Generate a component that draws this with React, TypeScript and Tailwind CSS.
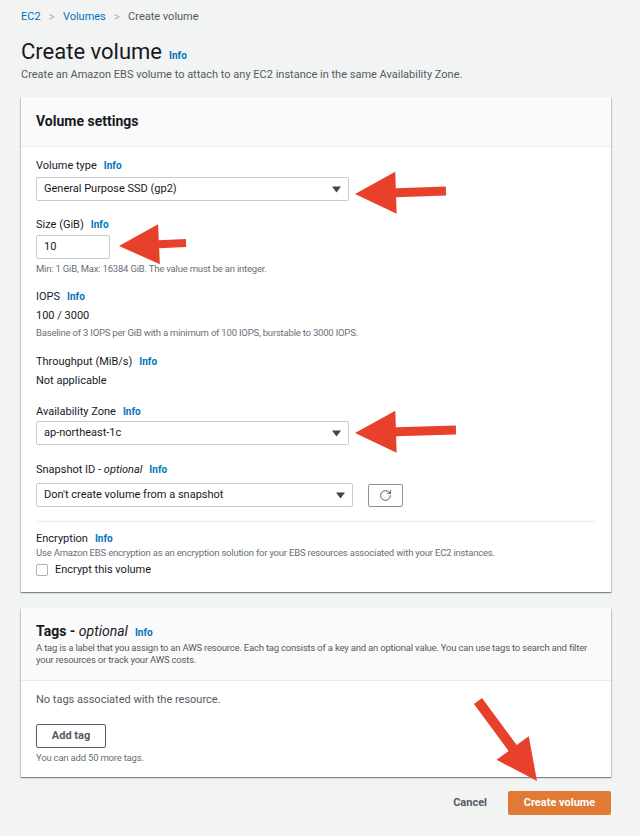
import { RotateCw } from 'lucide-react'

const font = { fontFamily: 'Roboto, "Liberation Sans", sans-serif' }

function Info() {
  return <span className="ml-[7px] text-[10px] font-bold text-[#0073bb]">Info</span>
}

function Label({ children }: { children: React.ReactNode }) {
  return <div className="flex items-baseline text-[11px] leading-[14px] text-[#16191f]">{children}</div>
}

function Hint({ children, className = '' }: { children: React.ReactNode; className?: string }) {
  return <p className={`text-[9.5px] leading-[13px] tracking-[-0.2px] text-[#687078] ${className}`}>{children}</p>
}

function Caret() {
  return (
    <svg width="9" height="7" viewBox="0 0 9 7" className="shrink-0">
      <path d="M0 0.5h9L4.5 6.5z" fill="#3f4650" />
    </svg>
  )
}

function Select({ value, width }: { value: string; width: string }) {
  return (
    <div className={`flex h-[24px] items-center justify-between rounded-[2px] border border-[#c6cccd] bg-white pl-[7px] pr-[7px] ${width}`}>
      <span className="text-[11px] text-[#16191f]">{value}</span>
      <Caret />
    </div>
  )
}

type Pt = { x: number; y: number }

// red annotation arrow: tail -> tip
function Arrow({ tail, tip, head = 41, half = 21, shaft = 4.5 }: { tail: Pt; tip: Pt; head?: number; half?: number; shaft?: number }) {
  const dx = tip.x - tail.x
  const dy = tip.y - tail.y
  const len = Math.hypot(dx, dy)
  const ux = dx / len
  const uy = dy / len
  const nx = -uy
  const ny = ux
  const bx = tip.x - ux * head
  const by = tip.y - uy * head
  const pts = [
    [tip.x, tip.y],
    [bx + nx * half, by + ny * half],
    [bx + nx * shaft, by + ny * shaft],
    [tail.x + nx * shaft, tail.y + ny * shaft],
    [tail.x - nx * shaft, tail.y - ny * shaft],
    [bx - nx * shaft, by - ny * shaft],
    [bx - nx * half, by - ny * half],
  ]
  return <polygon points={pts.map((p) => p.join(',')).join(' ')} fill="#e8412b" />
}

const cardShadow =
  'shadow-[0_1px_1px_0_rgba(0,28,36,0.3),1px_1px_1px_0_rgba(0,28,36,0.15),-1px_1px_1px_0_rgba(0,28,36,0.15)]'

export default function App() {
  return (
    <div className="relative min-h-[836px] w-[640px] bg-[#f2f3f3] px-[21px] pt-[10px]" style={font}>
      {/* breadcrumb */}
      <div className="flex items-center text-[11px] leading-[14px]">
        <span className="text-[#0073bb]">EC2</span>
        <span className="mx-[8px] text-[12px] text-[#aab7b8]">&gt;</span>
        <span className="text-[#0073bb]">Volumes</span>
        <span className="mx-[8px] text-[12px] text-[#aab7b8]">&gt;</span>
        <span className="text-[#545b64]">Create volume</span>
      </div>

      <div className="mt-[14px] flex items-baseline">
        <h1 className="text-[22px] leading-[28px] text-[#16191f]">Create volume</h1>
        <Info />
      </div>
      <p className="mt-[2px] text-[11px] leading-[14px] text-[#545b64]">
        Create an Amazon EBS volume to attach to any EC2 instance in the same Availability Zone.
      </p>

      {/* volume settings */}
      <div className={`mt-[15px] w-[590px] bg-white ${cardShadow}`}>
        <div className="flex h-[50px] items-center border-b border-[#eaeded] bg-[#fafafa] px-[15px]">
          <h2 className="text-[14px] font-bold text-[#16191f]">Volume settings</h2>
        </div>
        <div className="px-[15px] pb-[14px] pt-[12px]">
          <Label>Volume type<Info /></Label>
          <div className="mt-[4px]">
            <Select value="General Purpose SSD (gp2)" width="w-[313px]" />
          </div>

          <div className="mt-[17px]">
            <Label>Size (GiB)<Info /></Label>
          </div>
          <div className="mt-[3px] flex h-[24px] w-[74px] items-center rounded-[2px] border border-[#c6cccd] pl-[7px] text-[11px] text-[#16191f]">
            10
          </div>
          <Hint className="mt-[3px]">Min: 1 GiB, Max: 16384 GiB. The value must be an integer.</Hint>

          <div className="mt-[15px]">
            <Label>IOPS<Info /></Label>
          </div>
          <p className="mt-[5px] text-[11px] leading-[14px] text-[#16191f]">100 / 3000</p>
          <Hint className="mt-[3px]">Baseline of 3 IOPS per GiB with a minimum of 100 IOPS, burstable to 3000 IOPS.</Hint>

          <div className="mt-[16px]">
            <Label>Throughput (MiB/s)<Info /></Label>
          </div>
          <p className="mt-[5px] text-[11px] leading-[14px] text-[#16191f]">Not applicable</p>

          <div className="mt-[17px]">
            <Label>Availability Zone<Info /></Label>
          </div>
          <div className="mt-[2px]">
            <Select value="ap-northeast-1c" width="w-[313px]" />
          </div>

          <div className="mt-[18px]">
            <Label>
              Snapshot ID -&nbsp;<i>optional</i>
              <Info />
            </Label>
          </div>
          <div className="mt-[6px] flex items-center gap-[15px]">
            <Select value="Don't create volume from a snapshot" width="w-[317px]" />
            <div className="flex h-[23px] w-[35px] items-center justify-center rounded-[2px] border border-[#879596] bg-white">
              <RotateCw size={13} strokeWidth={1.8} className="text-[#545b64]" />
            </div>
          </div>

          <div className="mt-[14px] h-px w-[560px] bg-[#eaeded]" />

          <div className="mt-[10px]">
            <Label>Encryption<Info /></Label>
          </div>
          <Hint>Use Amazon EBS encryption as an encryption solution for your EBS resources associated with your EC2 instances.</Hint>
          <div className="mt-[3px] flex items-center gap-[7px]">
            <span className="h-[12px] w-[12px] rounded-[2px] border border-[#aab7b8] bg-white" />
            <span className="text-[11px] leading-[16px] text-[#16191f]">Encrypt this volume</span>
          </div>
        </div>
      </div>

      {/* tags */}
      <div className={`mt-[16px] w-[590px] bg-white ${cardShadow}`}>
        <div className="border-b border-[#eaeded] bg-[#fafafa] px-[15px] pb-[14px] pt-[14px]">
          <div className="flex items-baseline">
            <h2 className="text-[14px] font-bold leading-[18px] text-[#16191f]">
              Tags - <i className="font-normal">optional</i>
            </h2>
            <Info />
          </div>
          <p className="mt-[2px] text-[9.5px] leading-[12px] tracking-[-0.2px] text-[#545b64]">
            A tag is a label that you assign to an AWS resource. Each tag consists of a key and an optional value. You can use tags to search and filter
            <br />
            your resources or track your AWS costs.
          </p>
        </div>
        <div className="px-[15px] pb-[13px] pt-[12px]">
          <p className="text-[11px] leading-[14px] text-[#545b64]">No tags associated with the resource.</p>
          <button className="mt-[17px] flex h-[24px] w-[70px] items-center justify-center rounded-[2px] border border-[#545b64] bg-white text-[11px] font-bold text-[#545b64]">
            Add tag
          </button>
          <Hint className="mt-[3px] text-[#545b64]">You can add 50 more tags.</Hint>
        </div>
      </div>

      {/* footer */}
      <div className="mt-[14px] flex w-[590px] items-center justify-end">
        <span className="mr-[21px] text-[11px] font-bold text-[#545b64]">Cancel</span>
        <button className="flex h-[24px] w-[103px] items-center justify-center rounded-[2px] bg-[#e07a34] text-[11px] font-bold text-white">
          Create volume
        </button>
      </div>

      {/* annotation arrows */}
      <svg className="pointer-events-none absolute left-0 top-0" width="640" height="836">
        <Arrow tail={{ x: 446, y: 191 }} tip={{ x: 355, y: 194 }} />
        <Arrow tail={{ x: 186, y: 243 }} tip={{ x: 119, y: 246 }} head={40} half={20} shaft={4} />
        <Arrow tail={{ x: 456, y: 430 }} tip={{ x: 355, y: 433 }} />
        <Arrow tail={{ x: 478, y: 701 }} tip={{ x: 537, y: 781 }} head={41} half={20} shaft={5} />
      </svg>
    </div>
  )
}
